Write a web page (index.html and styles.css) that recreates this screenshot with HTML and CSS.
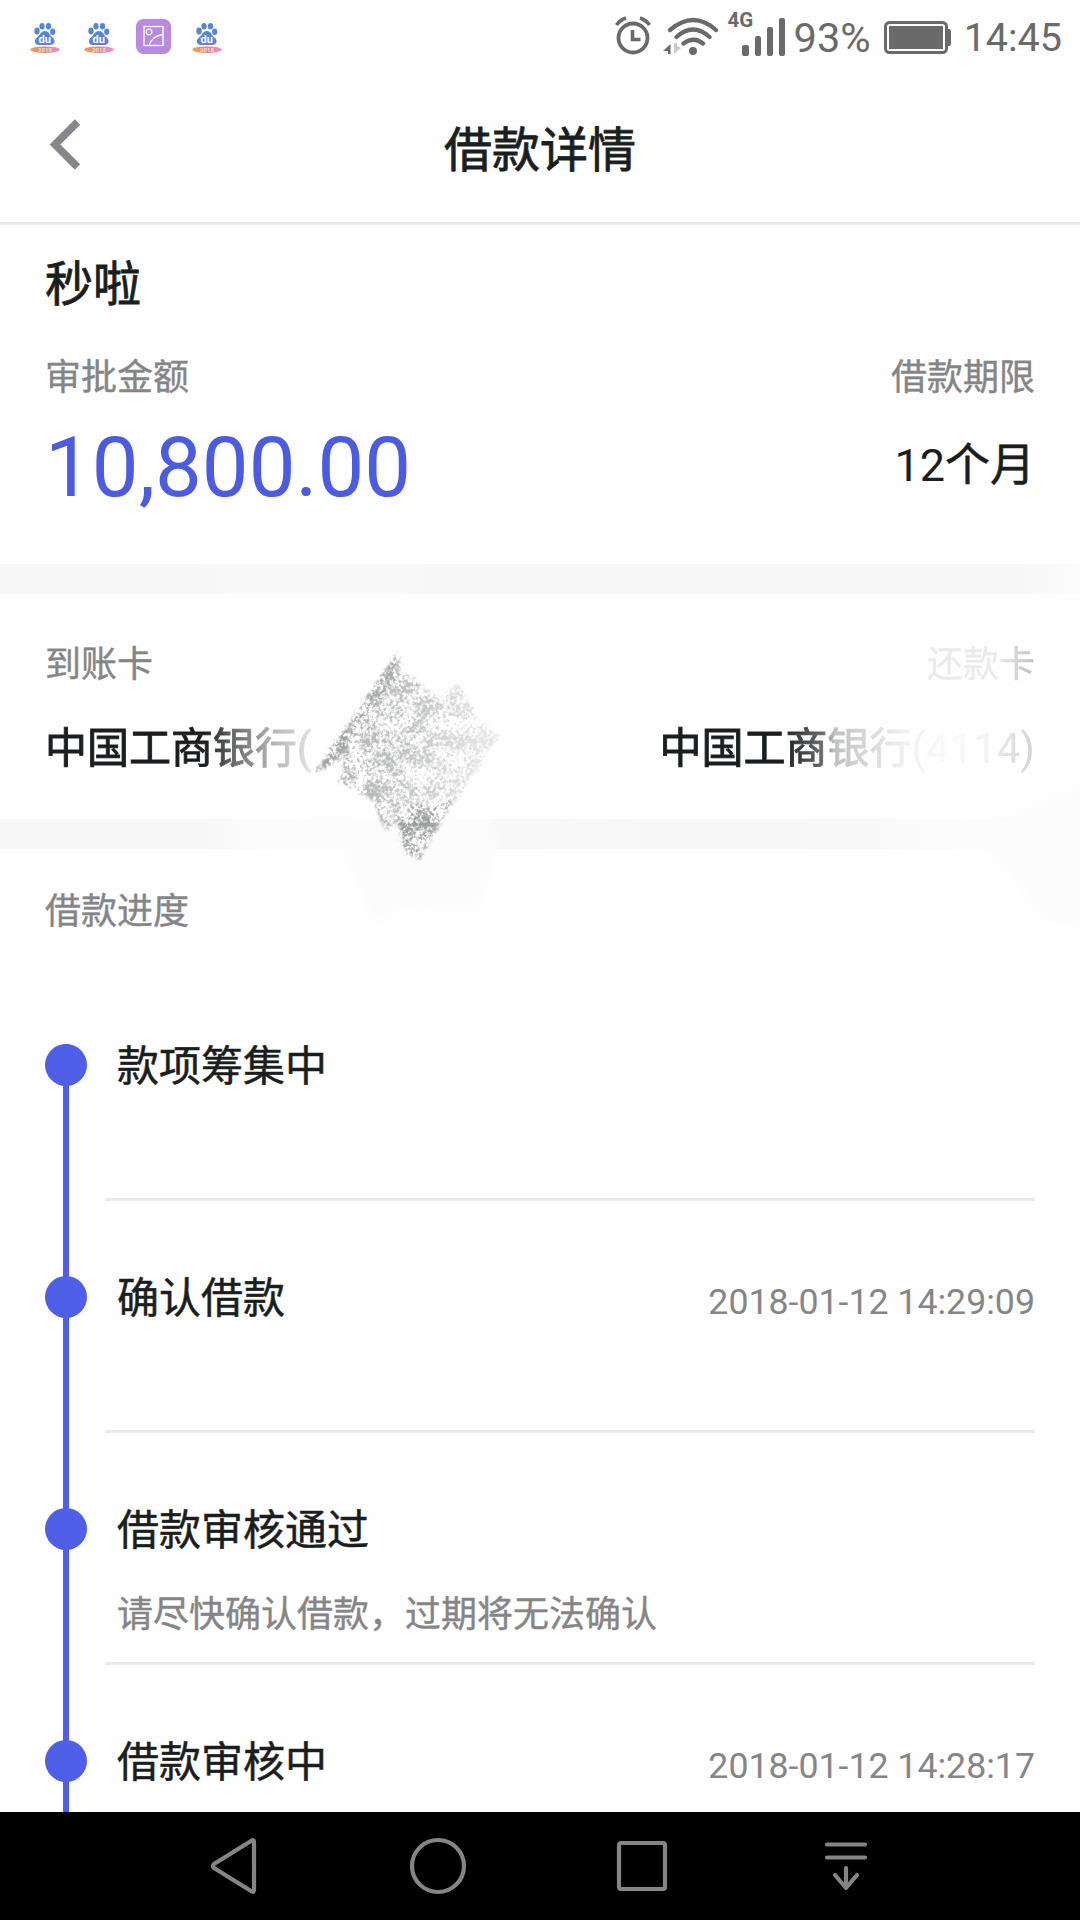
FILE: index.html
```html
<!DOCTYPE html>
<html lang="zh-CN">
<head>
<meta charset="utf-8">
<title>借款详情</title>
<link rel="stylesheet" href="styles.css">
</head>
<body>
<svg class="defs" width="0" height="0" aria-hidden="true">
  <defs>
    <linearGradient id="ribbon"><stop offset="0" stop-color="#f2a04f"/><stop offset=".5" stop-color="#e08478"/><stop offset="1" stop-color="#f08fd8"/></linearGradient>
    <symbol id="paw" viewBox="0 0 30 32">
      <g fill="#5686d6">
        <ellipse cx="7" cy="9" rx="2.700" ry="3.400"/>
        <ellipse cx="12" cy="4.200" rx="2.600" ry="3.300"/>
        <ellipse cx="18.500" cy="4.200" rx="2.600" ry="3.300"/>
        <ellipse cx="22.700" cy="9.800" rx="2.600" ry="3.200"/>
        <path d="M15 9C10.500 9 10.500 13 7 15.500C3.500 18 4.500 23 9 23H20C25 23 26 18 22.500 15.500C19 13 19.500 9 15 9Z"/>
      </g>
      <text x="14.800" y="20.800" text-anchor="middle" class="paw-text">du</text>
      <ellipse cx="15" cy="27.700" rx="14.700" ry="3.300" fill="url(#ribbon)"/>
      <text x="15" y="30" text-anchor="middle" class="paw-year">2018</text>
    </symbol>
  </defs>
</svg>
<div class="screen">
  <div class="status">
    <div class="notices">
      <svg width="30" height="32"><use href="#paw"/></svg>
      <svg width="30" height="32"><use href="#paw"/></svg>
      <svg class="gallery" width="35" height="35" viewBox="0 0 35 35">
        <rect width="35" height="35" rx="7.500" fill="#b98ade"/>
        <g fill="none" stroke="#fff" stroke-width="1.300"><rect x="8" y="7.500" width="19" height="19"/><circle cx="13" cy="13" r="2.800"/><path d="M13 26.500C15 20.500 19 16.500 27 15.500"/></g>
      </svg>
      <svg width="30" height="32"><use href="#paw"/></svg>
    </div>
    <div class="system">
      <svg class="alarm" width="36" height="40" viewBox="0 0 36 40" fill="none" stroke="#6a6a6a">
        <circle cx="18" cy="22" r="14.500" stroke-width="3.800"/><path d="M17.500 14V23.500H25.500" stroke-width="3.600"/><path d="M1.500 9Q5 4 11 2M34.500 9Q31 4 25 2" stroke-width="3.600"/>
      </svg>
      <svg class="wifi" width="56" height="40" viewBox="0 0 56 40" fill="none" stroke="#6a6a6a" stroke-width="4.300" stroke-linecap="round">
        <path d="M7 14Q30.500-6 53 14M13.500 21Q30 6 46.500 21M20.500 27.500Q30.500 20 40 27.500"/>
        <circle cx="30" cy="35" r="4" fill="#6a6a6a" stroke="none"/><path d="M7.500 29V38H5V35H0L7.500 28Z" fill="#6a6a6a" stroke="none"/><path d="M11 27V38L18 32L14 30V27Z" fill="#ccc" stroke="none"/>
      </svg>
      <div class="signal"><span>4G</span>
        <svg width="43" height="38" viewBox="0 0 43 38" fill="#6a6a6a"><rect y="27" width="7" height="11" rx="2"/><rect x="13" y="18" width="6" height="20" rx="2"/><rect x="25" y="9" width="6" height="29" rx="2"/><rect x="37" width="6" height="38" rx="2"/></svg>
      </div>
      <span class="percent">93%</span>
      <svg class="battery" width="67" height="34" viewBox="0 0 67 34"><rect x="1.500" y="1.500" width="61" height="30" rx="4" fill="#fff" stroke="#6a6a6a" stroke-width="3"/><rect x="5" y="5" width="54" height="23" fill="#6a6a6a"/><path d="M62 8H65Q67 8 67 11V22Q67 25 65 25H62Z" fill="#6a6a6a"/></svg>
      <span class="clock">14:45</span>
    </div>
  </div>
  <header class="header">
    <svg class="back" width="34" height="54" viewBox="0 0 34 54"><path d="M28.500 4L6 26.500L28.500 49" fill="none" stroke="#87868c" stroke-width="7.500"/></svg>
    <h1>借款详情</h1>
  </header>
  <section class="summary">
    <h2>秒啦</h2>
    <div class="row label"><span>审批金额</span><span>借款期限</span></div>
    <div class="row figures"><strong class="amount">10,800.00</strong><span class="term">12<b>个月</b></span></div>
  </section>
  <div class="band band-top"></div>
  <section class="cards">
    <div class="row label"><span>到账卡</span><span class="faint">还款卡</span></div>
    <div class="row bank"><span class="bank-in">中国工商银行(</span><span class="bank-out">中国工商银行<em>(4114)</em></span></div>
    <svg class="scribble" width="220" height="300" viewBox="300 640 220 300">
      <defs>
        <filter id="grain" x="-5%" y="-5%" width="110%" height="110%" color-interpolation-filters="sRGB">
          <feTurbulence type="fractalNoise" baseFrequency=".3" numOctaves="3" seed="5" result="n"/>
          <feTurbulence type="fractalNoise" baseFrequency=".06" numOctaves="3" seed="11" result="m"/>
          <feComposite in="n" in2="m" operator="arithmetic" k2=".6" k3=".4" result="mix"/>
          <feColorMatrix in="mix" values="0 0 0 0 .5  0 0 0 0 .51  0 0 0 0 .51  0 0 0 5 -2.100" result="g"/>
          <feDisplacementMap in="SourceGraphic" in2="n" scale="9" xChannelSelector="R" yChannelSelector="G" result="s"/>
          <feGaussianBlur in="s" stdDeviation="1.200" result="b"/>
          <feComposite in="g" in2="b" operator="in" result="c"/>
          <feGaussianBlur in="c" stdDeviation=".5"/>
        </filter>
        <filter id="soft"><feGaussianBlur stdDeviation="5"/></filter>
        <linearGradient id="shade" gradientUnits="userSpaceOnUse" x1="340" y1="720" x2="480" y2="740"><stop offset="0" stop-opacity=".62"/><stop offset=".5" stop-opacity=".48"/><stop offset="1" stop-opacity=".22"/></linearGradient>
      </defs>
      <path filter="url(#soft)" d="M345 850L375 925L400 905L475 910L495 850L490 820Z" fill="#fcfcfc"/>
      <path filter="url(#grain)" fill="url(#shade)" d="M397 651L314 773L345 757L338 782L362 793L374 802L384 830L396 825L405 850L419 860L450 810L500 735L480 722L458 684L440 698L417 680L401 672Z"/>
      <path filter="url(#grain)" fill="#000" fill-opacity=".6" d="M452 800L419 860L405 851L398 820L412 806Z"/>
      <path filter="url(#grain)" fill="#000" fill-opacity=".3" d="M397 652L316 772L332 766L402 668Z"/>
    </svg>
    <svg class="smear" width="110" height="150" viewBox="0 0 110 150"><path filter="url(#soft)" d="M10 55L65 20L125 0V140L75 135L45 95Z" fill="#fcfcfc"/></svg>
  </section>
  <div class="band band-bottom"></div>
  <section class="progress">
    <h3>借款进度</h3>
    <ol>
      <li><i></i><div class="step"><p class="row"><b>款项筹集中</b></p></div></li>
      <li><i></i><div class="step"><p class="row"><b>确认借款</b><time>2018-01-12 14:29:09</time></p></div></li>
      <li><i></i><div class="step"><p class="row"><b>借款审核通过</b></p><p class="note">请尽快确认借款，过期将无法确认</p></div></li>
      <li><i></i><div class="step"><p class="row"><b>借款审核中</b><time>2018-01-12 14:28:17</time></p></div></li>
    </ol>
  </section>
  <nav class="nav">
    <svg viewBox="0 0 60 60"><path d="M50 6V54Q50 57 47 55L10 32Q8 30 10 28L47 5Q50 3 50 6Z"/></svg>
    <svg viewBox="0 0 60 60"><circle cx="30" cy="30" r="26"/></svg>
    <svg viewBox="0 0 60 60"><rect x="7" y="7" width="46" height="46" rx="2"/></svg>
    <svg viewBox="0 0 60 60"><path d="M11 8.500H49M11 21.500H49M30 32V51M19 39L30 52L41 39"/></svg>
  </nav>
</div>
</body>
</html>
```
FILE: styles.css
```css
* { box-sizing: border-box; margin: 0; padding: 0; }
body { background: #fefefe; color: #1b1e20; font-family: Roboto, "Noto Sans CJK SC", sans-serif; }
.defs { position: absolute; }
svg { display: block; flex: none; }
.screen { width: 1080px; height: 1920px; display: flex; flex-direction: column; overflow: hidden; }

.status { height: 74px; flex: none; display: flex; justify-content: space-between; align-items: flex-start; padding: 0 18px 0 30px; color: #6a6a6a; }
.notices { display: flex; gap: 24px; padding-top: 22px; }
.gallery { margin: -3px -3px 0 -2px; }
.paw-text { font: 700 11px Roboto, sans-serif; fill: #fff; }
.paw-year { font: 700 6px Roboto, sans-serif; fill: #f8dfd4; }
.system { display: flex; align-items: flex-start; }
.alarm { margin: 16px 12px 0 0; }
.wifi { margin: 16px 9px 0 0; }
.signal { display: flex; padding-top: 18px; }
.signal span { width: 14px; white-space: nowrap; font: 700 20.500px/24px Roboto, sans-serif; margin-top: -10px; }
.percent { font-size: 41.500px; line-height: 48px; margin: 14px 0 0 9px; }
.battery { margin: 21px 12px 0 13px; }
.clock { font-size: 39.500px; line-height: 48px; margin-top: 14px; margin-left: 1px; }

.header { height: 151px; flex: none; display: grid; grid-template-columns: 120px 1fr 120px; border-bottom: 3px solid #ebebeb; }
.back { margin: 44px 0 0 49px; }
h1, h2 { font-size: 48px; font-weight: 400; line-height: 60px; -webkit-text-stroke: .8px currentColor; }
.header h1 { text-align: center; padding-top: 47px; }

.row { display: flex; justify-content: space-between; }
.summary { height: 339px; flex: none; padding: 30px 45px 0; }
.label { font-size: 36px; line-height: 44px; color: #858587; -webkit-text-stroke: .4px currentColor; }
.summary .label { margin-top: 41px; }
.figures { margin-top: 16px; }
.amount { font-size: 83.300px; font-weight: 400; line-height: 104px; color: #4c5ce0; }
.term { font-size: 45px; line-height: 100px; }
.term b { font-weight: 400; -webkit-text-stroke: .6px currentColor; }

.band { height: 30px; flex: none; background: #f7f7f7; }
.band-top { background: linear-gradient(90deg, #f7f7f7 200px, #f9f9f9 250px 390px, #f7f7f7 430px 1020px, #fbfbfb 1070px); }
.band-bottom { background: linear-gradient(90deg, #f7f7f7 200px, #fbfbfb 245px, #fcfcfc 440px, #f8f8f8 500px, #f7f7f7 780px, #fbfbfb 940px, #fcfcfc); }
.cards { height: 225px; flex: none; padding: 49px 45px 0; position: relative; }
.bank { font-size: 42px; line-height: 52px; margin-top: 36px; -webkit-text-stroke: .9px currentColor; }
.bank-in { -webkit-mask-image: linear-gradient(90deg, #000 160px, rgba(0,0,0,.7) 185px, rgba(0,0,0,.35) 225px, rgba(0,0,0,.12)); mask-image: linear-gradient(90deg, #000 160px, rgba(0,0,0,.7) 185px, rgba(0,0,0,.35) 225px, rgba(0,0,0,.12)); }
.bank-out { -webkit-mask-image: linear-gradient(90deg, #000 122px, rgba(0,0,0,.65) 164px, rgba(0,0,0,.28) 174px, rgba(0,0,0,.18) 205px, rgba(0,0,0,.06) 245px, rgba(0,0,0,.02) 290px, rgba(0,0,0,.05) 325px, rgba(0,0,0,.2)); mask-image: linear-gradient(90deg, #000 122px, rgba(0,0,0,.65) 164px, rgba(0,0,0,.28) 174px, rgba(0,0,0,.18) 205px, rgba(0,0,0,.06) 245px, rgba(0,0,0,.02) 290px, rgba(0,0,0,.05) 325px, rgba(0,0,0,.2)); }
.bank-out em { font-style: normal; -webkit-text-stroke: 0; }
.faint { -webkit-mask-image: linear-gradient(90deg, rgba(0,0,0,.16) 65%, rgba(0,0,0,.5)); mask-image: linear-gradient(90deg, rgba(0,0,0,.16) 65%, rgba(0,0,0,.5)); }
.scribble { position: absolute; left: 300px; top: 46px; z-index: 1; }
.smear { position: absolute; right: 0; top: 190px; z-index: 1; }

.progress { flex: 1; min-height: 0; overflow: hidden; padding: 41px 45px 0; }
h3 { font-size: 36px; font-weight: 400; line-height: 44px; color: #858587; -webkit-text-stroke: .4px currentColor; }
ol { list-style: none; margin-top: 110px; }
li { height: 232px; display: grid; grid-template-columns: 42px 930px; justify-content: space-between; background: linear-gradient(#505fe2, #505fe2) 18px 0 / 6px 100% no-repeat; }
li i { width: 42px; height: 42px; border-radius: 50%; background: #505fe8; }
.step { height: 157px; border-bottom: 3px solid #ebebeb; padding-left: 12px; }
.step .row { height: 52px; line-height: 52px; margin-top: -3px; }
.step b { font-size: 42px; font-weight: 400; -webkit-text-stroke: .5px currentColor; }
time { font-size: 35.700px; line-height: 58px; color: #858587; }
.step .note { font-size: 36px; line-height: 44px; color: #858587; margin-top: 36px; -webkit-text-stroke: .4px currentColor; }

.nav { height: 108px; flex: none; background: #000; display: flex; justify-content: center; align-items: center; gap: 144px; }
.nav svg { width: 60px; height: 60px; fill: none; stroke: #858585; stroke-width: 4.200; stroke-linecap: round; stroke-linejoin: round; }
```
